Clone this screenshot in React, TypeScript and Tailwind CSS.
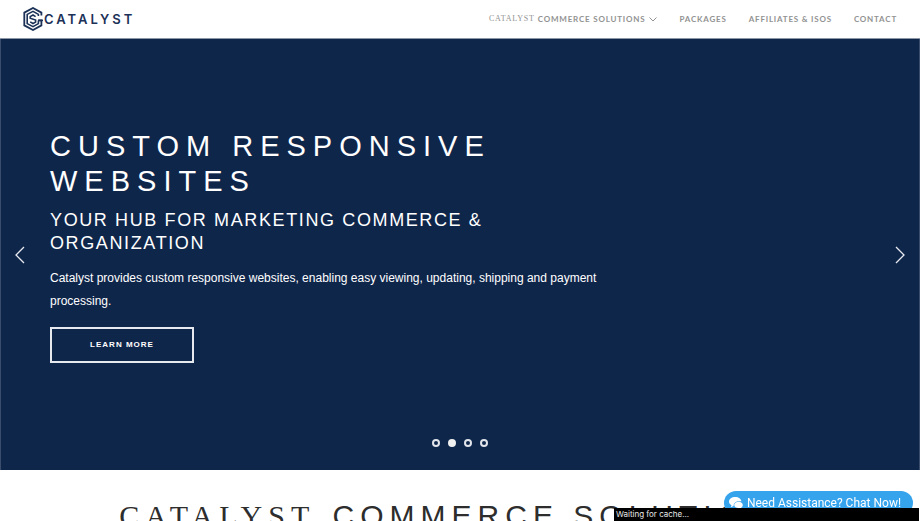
const navLink =
  "flex items-center whitespace-nowrap text-[#929292] hover:text-[#10264b]";

const slides = [
  "Online commerce",
  "Custom responsive websites",
  "Marketing",
  "Payment processing",
];

function Logo() {
  return (
    <a href="#home" aria-label="Catalyst home" className="flex items-center gap-px text-[#1b3157]">
      <svg width="20" height="24" viewBox="0 0 20 24" fill="none" stroke="currentColor" strokeWidth="1.8">
        <path d="M18.4 8.4V5.6L10 1L1.3 5.6v12.800L10 23l8.400-4.600v-5h-3" />
        <path d="M15.400 9V7.400L10 4.300L4.200 7.400v9.200L10 19.700l5.400-3.100v-3.200" strokeWidth="1.600" />
        <path d="M12.600 9.600L10 8L7.200 9.600v1.600l5.400 1.900v2L10 16.500l-2.800-1.600" strokeWidth="1.600" />
        <path d="M15 13.400h5" strokeWidth="1.600" />
      </svg>
      <span className="font-[Inter,sans-serif] text-[13px] leading-4 font-semibold tracking-[3px]">CATALYST</span>
    </a>
  );
}

function Header() {
  return (
    <header className="flex h-[39px] items-center justify-between border-b border-[#8d96a5] px-[23px]">
      <Logo />
      <nav className="flex items-center gap-[22px] font-[Lato,sans-serif] text-[8px] leading-3 font-bold tracking-widest">
        <a href="#solutions" className={navLink}>
          <span className="font-['Liberation_Serif',serif] font-normal">CATALYST</span>
          <span className="ml-[3px]">COMMERCE SOLUTIONS</span>
          <svg width="8" height="5" viewBox="0 0 8 5" fill="none" stroke="currentColor" className="ml-1">
            <path d="M.5 .5L4 4L7.5 .5" />
          </svg>
        </a>
        <a href="#packages" className={navLink}>PACKAGES</a>
        <a href="#affiliates" className={navLink}>AFFILIATES &amp; ISOS</a>
        <a href="#contact" className={navLink}>CONTACT</a>
      </nav>
    </header>
  );
}

function Arrow({ label, path }: { label: string; path: string }) {
  return (
    <button type="button" aria-label={label} className="text-[#e6e9ee]">
      <svg width="10" height="18" viewBox="0 0 10 18" fill="none" stroke="currentColor" strokeWidth="1.3">
        <path d={path} />
      </svg>
    </button>
  );
}

function Hero() {
  return (
    <section className="relative flex h-[431px] items-center justify-between border-x border-[#3b4d6d] bg-[#0f264b] px-[14px] text-white">
      <Arrow label="Previous slide" path="M9 1L1 9L9 17" />
      <div className="mb-[18px] ml-[25px] flex-1">
        <div className="max-w-[560px]">
          <h1 className="text-[29px] leading-[35px] tracking-[7px]">CUSTOM RESPONSIVE WEBSITES</h1>
          <h2 className="mt-[10px] max-w-[480px] text-[18px] leading-[23px] tracking-[0.09em]">
            YOUR HUB FOR MARKETING COMMERCE &amp; ORGANIZATION
          </h2>
          <p className="mt-3 text-[12px] leading-[23px]">
            Catalyst provides custom responsive websites, enabling easy viewing, updating, shipping and payment
            processing.
          </p>
          <button
            type="button"
            className="mt-[14px] h-9 w-36 border-2 border-[#e6e9ee] text-[8px] font-bold tracking-[1px]"
          >
            LEARN MORE
          </button>
        </div>
      </div>
      <Arrow label="Next slide" path="M1 1L9 9L1 17" />
      <div className="absolute inset-x-0 bottom-[23px] flex justify-center gap-2">
        {slides.map((slide, index) => (
          <button
            key={slide}
            type="button"
            aria-label={slide}
            className={
              index === 1
                ? "size-2 rounded-full border-2 border-[#f0f0f0] bg-[#f0f0f0]"
                : "size-2 rounded-full border-2 border-[#e1e5eb]"
            }
          />
        ))}
      </div>
    </section>
  );
}

function ChatIcon() {
  return (
    <svg width="14" height="12" viewBox="0 0 14 12" fill="white">
      <path d="M6.2 0C2.8 0 0 2 0 4.6c0 1.6 1 2.9 2.5 3.7L1.7 10.300L4.600 9C4.500 6.200 7 4.300 10 4.300h2.400C12.300 2 9.600 0 6.200 0Z" />
      <path d="M9.600 4.800C7.200 4.800 5.200 6.200 5.200 8s1.900 3.100 4.400 3.100h1l2.200.8l-.5-1.500c.9-.5 1.500-1.400 1.500-2.400c0-1.800-1.800-3.200-4.200-3.200Z" />
    </svg>
  );
}

export default function App() {
  return (
    <div className="relative h-screen overflow-hidden bg-white font-['Liberation_Sans',Arial,sans-serif]">
      <Header />
      <Hero />
      <main className="flex justify-center pt-[27px]">
        <h2 className="text-[30px] leading-[38px] tracking-[6px] whitespace-nowrap text-[#2d2d2d]">
          <span className="mr-[3px] font-['Liberation_Serif',serif]">CATALYST</span> COMMERCE SOLUTIONS
        </h2>
      </main>
      <button
        type="button"
        className="fixed right-[7px] bottom-[6px] flex h-6 items-center gap-1 rounded-full bg-[#36a3ed] pr-3 pl-[5px] font-[Roboto,sans-serif] text-[12px] text-white"
      >
        <ChatIcon />
        Need Assistance? Chat Now!
      </button>
      <div
        role="status"
        className="fixed right-px bottom-0 left-[614px] h-[13px] bg-black pl-[2px] font-[Inter,sans-serif] text-[8px] leading-[13px] text-[#e8e8e8]"
      >
        Waiting for cache...
      </div>
    </div>
  );
}
